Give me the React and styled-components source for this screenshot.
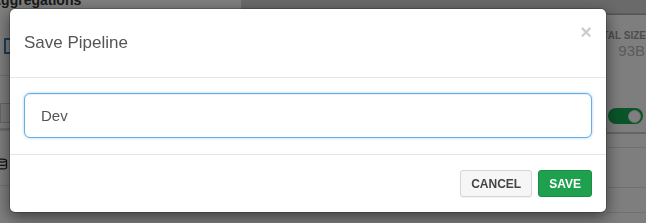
import React from "react";
import styled, { createGlobalStyle } from "styled-components";
import { Database } from "lucide-react";

const Global = createGlobalStyle`
  html, body { margin: 0; padding: 0; overflow: hidden; }
  body { font-family: "Liberation Sans", Arial, sans-serif; background: #fff; }
  * { box-sizing: border-box; }
`;

const Page = styled.div`
  width: 646px;
  height: 223px;
  display: flex;
  flex-direction: column;
  overflow: hidden;
  background: #fff;
`;

const TopBar = styled.div`
  height: 14px;
  display: flex;
  flex: none;
`;

const Tab = styled.div`
  width: 250px;
  background: #fff;
  font-size: 14px;
  font-weight: bold;
  color: #333;
  line-height: 14px;
  margin-top: -7px;
  margin-left: -9px;
  white-space: nowrap;
`;

const TopFill = styled.div`
  flex: 1;
  background: #d4d4d4;
  border-bottom: 1px solid #bbb;
`;

const Main = styled.div`
  flex: 1;
  display: flex;
`;

const LeftPane = styled.div`
  flex: 1;
  display: flex;
  flex-direction: column;
`;

const PipelineBox = styled.div`
  margin: 24px 0 0 4px;
  width: 220px;
  height: 16px;
  border: 2px solid #3d79b8;
`;

const Rule = styled.div`
  margin-top: ${(p) => p.$top}px;
  height: ${(p) => p.$h || 1}px;
  background: ${(p) => p.$c || "#e4e4e4"};
`;

const FieldBox = styled.div`
  margin-top: 27px;
  height: 20px;
  width: 200px;
  border: 1px solid #ccc;
  background: #f7f7f7;
`;

const IconRow = styled.div`
  margin: 27px 0 0 -4px;
  height: 12px;
  display: flex;
  color: #222;
`;

const RightPane = styled.div`
  width: 39px;
  display: flex;
  flex-direction: column;
  border-top: 1px solid #aaa;
  background: #fdfdfd;
`;

const StatLabel = styled.div`
  display: flex;
  justify-content: flex-end;
  margin-top: 15px;
  font-size: 10px;
  font-weight: bold;
  color: #999;
  line-height: 12px;
  white-space: nowrap;
`;

const StatValue = styled.div`
  display: flex;
  justify-content: flex-end;
  margin-top: 1px;
  font-size: 15px;
  color: #b5b5b5;
  line-height: 16px;
  white-space: nowrap;
  padding-right: 1px;
`;

const ToggleRow = styled.div`
  display: flex;
  justify-content: flex-end;
  padding-right: 3px;
  margin-top: 49px;
`;

const Toggle = styled.div`
  width: 35px;
  height: 16px;
  border-radius: 8px;
  background: #13a852;
  display: flex;
  justify-content: flex-end;
  align-items: center;
  padding-right: 2px;
`;

const Knob = styled.div`
  width: 13px;
  height: 13px;
  border-radius: 50%;
  background: #fff;
  border: 1px solid #ddd;
`;

const Overlay = styled.div`
  position: fixed;
  inset: 0;
  background: rgba(0, 0, 0, 0.5);
  padding: 8px 0 0 9px;
`;

const Dialog = styled.div`
  width: 598px;
  background: #fff;
  border-radius: 6px;
  box-shadow: 0 5px 15px rgba(0, 0, 0, 0.5);
  border: 1px solid rgba(0, 0, 0, 0.2);
  background-clip: padding-box;
`;

const Header = styled.div`
  display: flex;
  align-items: center;
  justify-content: space-between;
  padding: 21px 14px 22px 14px;
  border-bottom: 1px solid #e5e5e5;
`;

const Title = styled.h4`
  margin: 0;
  font-size: 17px;
  font-weight: normal;
  line-height: 25px;
  color: #555;
`;

const Close = styled.button`
  border: 0;
  background: none;
  padding: 0;
  margin-top: -21px;
  font-family: "Liberation Sans", Arial, sans-serif;
  font-size: 20px;
  font-weight: bold;
  line-height: 20px;
  color: #000;
  opacity: 0.2;
  cursor: pointer;
`;

const Body = styled.div`
  padding: 15px 14px 16px;
`;

const Input = styled.input`
  display: block;
  width: 100%;
  height: 45px;
  padding: 0 16px;
  font-family: "Liberation Sans", Arial, sans-serif;
  font-size: 15px;
  color: #555;
  caret-color: #333;
  border: 1px solid #66afe9;
  border-radius: 6px;
  outline: 0;
  box-shadow: inset 0 1px 1px rgba(0, 0, 0, 0.075), 0 0 3px rgba(102, 175, 233, 0.6);
`;

const Footer = styled.div`
  display: flex;
  justify-content: flex-end;
  gap: 6px;
  padding: 15px 14px 15px;
  border-top: 1px solid #e5e5e5;
`;

const Button = styled.button`
  height: 27px;
  padding: 0 10px;
  border-radius: 3px;
  font-family: "Liberation Sans", Arial, sans-serif;
  font-size: 12px;
  font-weight: bold;
  text-transform: uppercase;
  cursor: pointer;
  border: 1px solid ${(p) => (p.$primary ? "#169045" : "#d6d6d6")};
  background: ${(p) => (p.$primary ? "#1ea04f" : "#f6f6f6")};
  color: ${(p) => (p.$primary ? "#fff" : "#444")};
  box-shadow: ${(p) => (p.$primary ? "none" : "0 1px 1px rgba(0,0,0,0.05)")};
`;

export default function App() {
  return (
    <>
      <Global />
      <Page>
        <TopBar>
          <Tab>Aggregations</Tab>
          <TopFill />
        </TopBar>
        <Main>
          <LeftPane>
            <PipelineBox />
            <Rule $top={21} />
            <FieldBox />
            <Rule $top={5} $h={3} $c="#d8d8d8" />
            <IconRow>
              <Database size={12} strokeWidth={2.5} />
            </IconRow>
            <Rule $top={15} />
          </LeftPane>
          <RightPane>
            <StatLabel>TOTAL SIZE</StatLabel>
            <StatValue>93B</StatValue>
            <ToggleRow>
              <Toggle>
                <Knob />
              </Toggle>
            </ToggleRow>
            <Rule $top={8} $h={2} $c="#c8c8c8" />
            <Rule $top={13} $c="#e0e0e0" />
            <Rule $top={39} $c="#e0e0e0" />
            <Rule $top={24} $c="#e0e0e0" />
          </RightPane>
        </Main>
      </Page>
      <Overlay>
        <Dialog role="dialog">
          <Header>
            <Title>Save Pipeline</Title>
            <Close aria-label="Close">×</Close>
          </Header>
          <Body>
            <Input defaultValue="Dev" autoFocus />
          </Body>
          <Footer>
            <Button>Cancel</Button>
            <Button $primary>Save</Button>
          </Footer>
        </Dialog>
      </Overlay>
    </>
  );
}
